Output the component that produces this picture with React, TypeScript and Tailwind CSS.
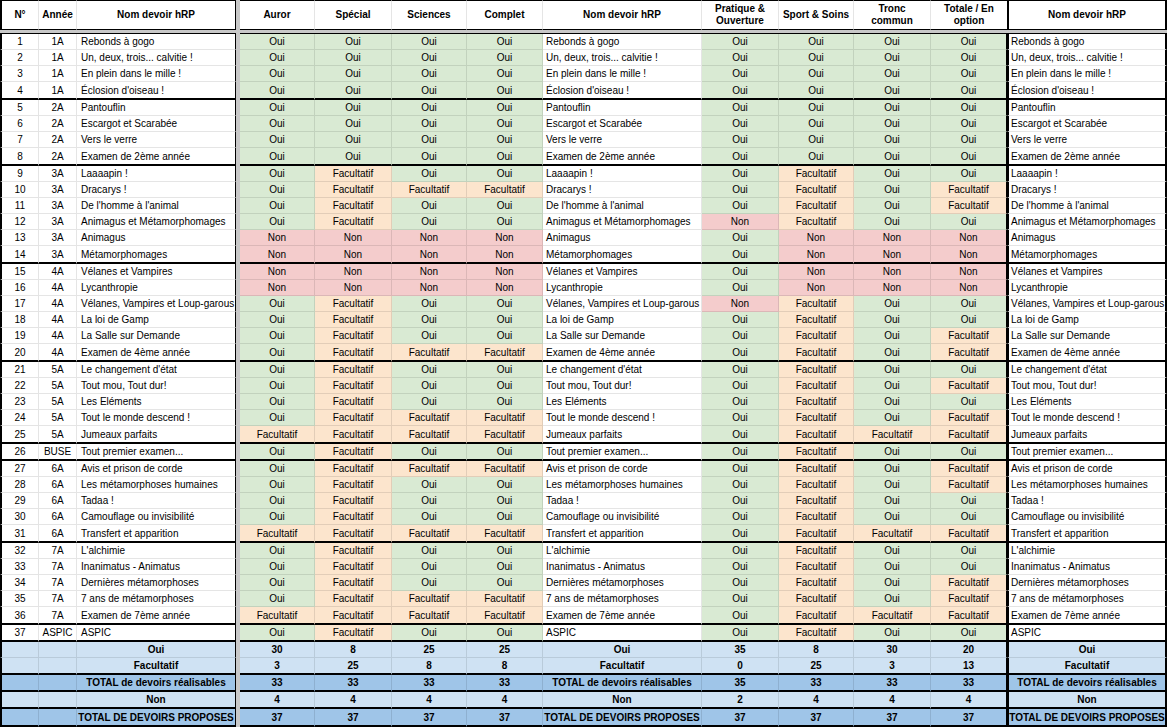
import clsx from "clsx";
import type { ReactNode } from "react";

type Status = "O" | "F" | "N";

const rows: [string, string, string, string][] = [
  ["1", "1A", "Rebonds à gogo", "OOOOOOOO"],
  ["2", "1A", "Un, deux, trois... calvitie !", "OOOOOOOO"],
  ["3", "1A", "En plein dans le mille !", "OOOOOOOO"],
  ["4", "1A", "Éclosion d'oiseau !", "OOOOOOOO"],
  ["5", "2A", "Pantouflin", "OOOOOOOO"],
  ["6", "2A", "Escargot et Scarabée", "OOOOOOOO"],
  ["7", "2A", "Vers le verre", "OOOOOOOO"],
  ["8", "2A", "Examen de 2ème année", "OOOOOOOO"],
  ["9", "3A", "Laaaapin !", "OFOOOFOO"],
  ["10", "3A", "Dracarys !", "OFFFOFOF"],
  ["11", "3A", "De l'homme à l'animal", "OFOOOFOF"],
  ["12", "3A", "Animagus et Métamorphomages", "OFOONFOO"],
  ["13", "3A", "Animagus", "NNNNONNN"],
  ["14", "3A", "Métamorphomages", "NNNNONNN"],
  ["15", "4A", "Vélanes et Vampires", "NNNNONNN"],
  ["16", "4A", "Lycanthropie", "NNNNONNN"],
  ["17", "4A", "Vélanes, Vampires et Loup-garous", "OFOONFOO"],
  ["18", "4A", "La loi de Gamp", "OFOOOFOO"],
  ["19", "4A", "La Salle sur Demande", "OFOOOFOF"],
  ["20", "4A", "Examen de 4ème année", "OFFFOFOF"],
  ["21", "5A", "Le changement d'état", "OFOOOFOO"],
  ["22", "5A", "Tout mou, Tout dur!", "OFOOOFOF"],
  ["23", "5A", "Les Eléments", "OFOOOFOO"],
  ["24", "5A", "Tout le monde descend !", "OFFFOFOF"],
  ["25", "5A", "Jumeaux parfaits", "FFFFOFFF"],
  ["26", "BUSE", "Tout premier examen...", "OFOOOFOO"],
  ["27", "6A", "Avis et prison de corde", "OFFFOFOF"],
  ["28", "6A", "Les métamorphoses humaines", "OFOOOFOF"],
  ["29", "6A", "Tadaa !", "OFOOOFOO"],
  ["30", "6A", "Camouflage ou invisibilité", "OFOOOFOO"],
  ["31", "6A", "Transfert et apparition", "FFFFOFFF"],
  ["32", "7A", "L'alchimie", "OFOOOFOO"],
  ["33", "7A", "Inanimatus - Animatus", "OFOOOFOO"],
  ["34", "7A", "Dernières métamorphoses", "OFOOOFOF"],
  ["35", "7A", "7 ans de métamorphoses", "OFFFOFOF"],
  ["36", "7A", "Examen de 7ème année", "FFFFOFFF"],
  ["37", "ASPIC", "ASPIC", "OFOOOFOO"],
];

const groupEnds = new Set([4, 8, 14, 20, 25, 26, 31, 36, 37]);
const shortRows = new Set([26, 37]);

const label: Record<Status, string> = { O: "Oui", F: "Facultatif", N: "Non" };
const tint: Record<Status, string> = {
  O: "bg-[#d9ead3]",
  F: "bg-[#fce5cd]",
  N: "bg-[#f4cccc]",
};

const leftCols = ["w-[75px]", "w-[77px]", "w-[75px]", "w-[76px]"];
const rightCols = ["w-[77px]", "w-[75px]", "w-[77px]", "w-[76px]"];

const count = (i: number, s: Status) => rows.filter((r) => r[3][i] === s).length;

function Cell({
  w,
  end,
  right = "thin",
  left,
  className,
  children,
}: {
  w: string;
  end?: boolean;
  right?: "thin" | "black" | "thick";
  left?: boolean;
  className?: string;
  children?: ReactNode;
}) {
  return (
    <div
      className={clsx(
        "flex shrink-0 items-center overflow-hidden whitespace-nowrap",
        end ? "border-b-2 border-b-black" : "border-b border-b-black/10",
        right === "thin" && "border-r border-r-black/10",
        right === "black" && "border-r border-r-black",
        right === "thick" && "border-r-2 border-r-black",
        left && "border-l-2 border-l-black",
        w,
        className,
      )}
    >
      {children}
    </div>
  );
}

const Divider = () => <div className="w-[4px] shrink-0 bg-[#c8c8c8]" />;

function Header() {
  const h = "flex shrink-0 items-center justify-center text-center font-bold leading-[12px] border-t border-b border-t-black border-b-black";
  return (
    <div className="flex h-[30px]">
      <div className={clsx(h, "w-[39px] border-l-2 border-l-black border-r border-r-black/10")}>N°</div>
      <div className={clsx(h, "w-[38px] border-r border-r-black/10")}>Année</div>
      <div className={clsx(h, "w-[159px] border-r border-r-black")}>Nom devoir hRP</div>
      <Divider />
      {["Auror", "Spécial", "Sciences", "Complet"].map((t, i) => (
        <div key={t} className={clsx(h, leftCols[i], "border-r border-r-black/10")}>{t}</div>
      ))}
      <div className={clsx(h, "w-[159px] border-r border-r-black/10")}>Nom devoir hRP</div>
      {[
        ["Pratique &", "Ouverture"],
        ["Sport & Soins"],
        ["Tronc", "commun"],
        ["Totale / En", "option"],
      ].map((t, i) => (
        <div key={t[0]} className={clsx(h, rightCols[i], i < 3 && "border-r border-r-black/10")}>
          <div>
            {t.map((l) => (
              <div key={l}>{l}</div>
            ))}
          </div>
        </div>
      ))}
      <div className={clsx(h, "w-[160px] border-l-2 border-l-black border-r-2 border-r-black")}>Nom devoir hRP</div>
    </div>
  );
}

function DataRow({ row }: { row: [string, string, string, string] }) {
  const [num, year, name, st] = row;
  const n = Number(num);
  const end = groupEnds.has(n);
  const vals = st.split("") as Status[];
  return (
    <div className={clsx("flex", shortRows.has(n) ? "h-[17px]" : end ? "h-[18px]" : "h-[16px]")}>
      <Cell w="w-[39px]" end={end} left className="justify-center">{num}</Cell>
      <Cell w="w-[38px]" end={end} className="justify-center">{year}</Cell>
      <Cell w="w-[159px]" end={end} right="black" className="pl-[4px]">{name}</Cell>
      <Divider />
      {vals.slice(0, 4).map((s, i) => (
        <Cell key={i} w={leftCols[i]} end={end} className={clsx("justify-center", tint[s])}>{label[s]}</Cell>
      ))}
      <Cell w="w-[159px]" end={end} className="pl-[3px]">{name}</Cell>
      {vals.slice(4).map((s, i) => (
        <Cell key={i} w={rightCols[i]} end={end} right={i === 3 ? "black" : "thin"} className={clsx("justify-center", tint[s])}>
          {label[s]}
        </Cell>
      ))}
      <Cell w="w-[160px]" end={end} left right="thick" className="pl-[2px]">{name}</Cell>
    </div>
  );
}

function FooterRow({
  title,
  values,
  dark,
  end,
  tall,
}: {
  title: string;
  values: number[];
  dark?: boolean;
  end?: boolean;
  tall?: boolean;
}) {
  const bg = dark ? "bg-[#9fc5e8]" : "bg-[#cfe2f3]";
  return (
    <div className={clsx("flex font-bold", tall ? "h-[18px]" : end ? "h-[17px]" : "h-[16px]")}>
      <Cell w="w-[39px]" end={end} left className={bg} />
      <Cell w="w-[38px]" end={end} className={bg} />
      <Cell w="w-[159px]" end={end} right="black" className={clsx(bg, "justify-center")}>{title}</Cell>
      <Divider />
      {values.slice(0, 4).map((v, i) => (
        <Cell key={i} w={leftCols[i]} end={end} className={clsx(bg, "justify-center")}>{v}</Cell>
      ))}
      <Cell w="w-[159px]" end={end} className={clsx(bg, "justify-center")}>{title}</Cell>
      {values.slice(4).map((v, i) => (
        <Cell key={i} w={rightCols[i]} end={end} right={i === 3 ? "black" : "thin"} className={clsx(bg, "justify-center")}>
          {v}
        </Cell>
      ))}
      <Cell w="w-[160px]" end={end} left right="thick" className={clsx(bg, "justify-center")}>{title}</Cell>
    </div>
  );
}

export default function App() {
  const idx = [0, 1, 2, 3, 4, 5, 6, 7];
  const oui = idx.map((i) => count(i, "O"));
  const fac = idx.map((i) => count(i, "F"));
  const non = idx.map((i) => count(i, "N"));

  return (
    <div className="h-[727px] w-[1168px] overflow-hidden bg-white font-['Liberation_Sans',Arial,sans-serif] text-[10px] text-black">
      <Header />
      <div className="flex h-[3px]">
        <div className="w-[236px] bg-[#c8c8c8]" />
        <Divider />
        <div className="w-[927px] bg-[#c8c8c8]" />
      </div>
      <div className="flex h-[1px]">
        <div className="w-[236px] bg-black" />
        <Divider />
        <div className="w-[927px] bg-black" />
      </div>
      {rows.map((r) => (
        <DataRow key={r[0]} row={r} />
      ))}
      <FooterRow title="Oui" values={oui} />
      <FooterRow title="Facultatif" values={fac} end />
      <FooterRow title="TOTAL de devoirs réalisables" values={idx.map((i) => oui[i] + fac[i])} dark end />
      <FooterRow title="Non" values={non} end />
      <FooterRow title="TOTAL DE DEVOIRS PROPOSES" values={idx.map(() => rows.length)} dark end tall />
    </div>
  );
}
